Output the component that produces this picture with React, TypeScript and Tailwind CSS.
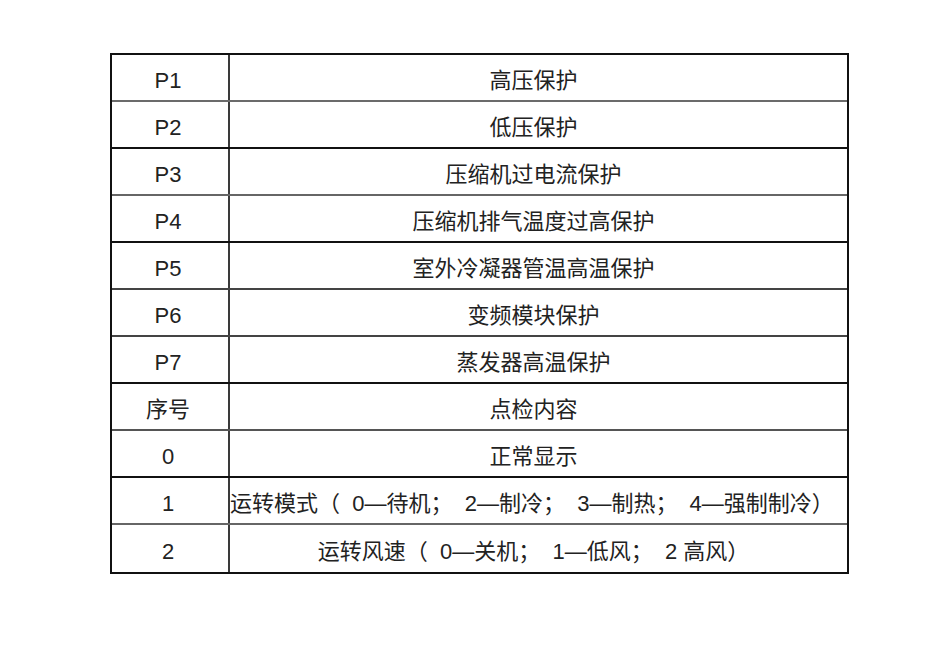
const rows = [
  { code: 'P1', text: '高压保护', line: 'border-[#6b6b6b]' },
  { code: 'P2', text: '低压保护', line: 'border-[#111]' },
  { code: 'P3', text: '压缩机过电流保护', line: 'border-[#666]' },
  { code: 'P4', text: '压缩机排气温度过高保护', line: 'border-[#111]' },
  { code: 'P5', text: '室外冷凝器管温高温保护', line: 'border-[#444]' },
  { code: 'P6', text: '变频模块保护', line: 'border-[#444]' },
  { code: 'P7', text: '蒸发器高温保护', line: 'border-[#111]' },
  { code: '序号', text: '点检内容', line: 'border-[#555]' },
  { code: '0', text: '正常显示', line: 'border-[#111]' },
  {
    code: '1',
    text: '运转模式（  0—待机；  2—制冷；  3—制热；  4—强制制冷）',
    line: 'border-[#666]',
    left: true,
  },
  { code: '2', text: '运转风速（  0—关机；  1—低风；  2 高风）', line: 'border-transparent' },
];

const App = () => {
  return (
    <div
      className="h-[649px] w-[950px] bg-white pl-[110px] pt-[53px] text-[22px] text-[#222]"
      style={{ fontFamily: '"Liberation Sans", "Noto Sans CJK SC", sans-serif' }}
    >
      <div className="w-[739px] border-2 border-[#111]">
        {rows.map((row, i) => (
          <div
            key={i}
            className={`flex h-[47px] ${i < rows.length - 1 ? 'border-b-2' : ''} ${row.line}`}
          >
            <div className="flex w-[118px] items-center justify-center border-r-2 border-[#3a3a3a] pr-[4px] pt-[7px] leading-none">
              {row.code}
            </div>
            <div
              className={`flex flex-1 items-center whitespace-pre pt-[7px] leading-none ${
                row.left ? 'justify-start' : 'justify-center pr-[10px]'
              }`}
            >
              {row.text}
            </div>
          </div>
        ))}
      </div>
    </div>
  );
};

export default App;
